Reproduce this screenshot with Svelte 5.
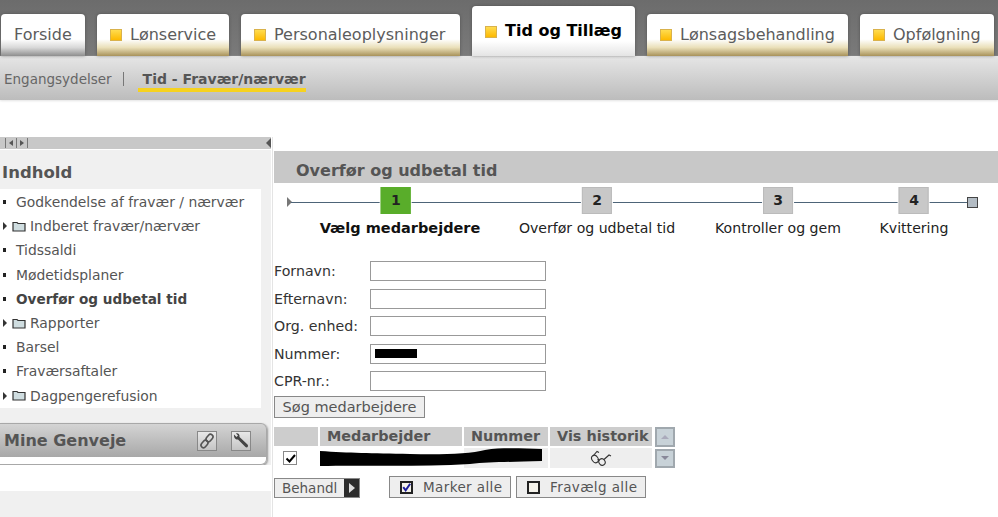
<script lang="ts">
  const tabs = [
    { label: 'Forside', width: 84, square: false },
    { label: 'Lønservice', width: 132, square: true },
    { label: 'Personaleoplysninger', width: 219, square: true },
    { label: 'Tid og Tillæg', width: 163, square: true, active: true },
    { label: 'Lønsagsbehandling', width: 201, square: true },
    { label: 'Opfølgning', width: 134, square: true }
  ];

  const menu = [
    { label: 'Godkendelse af fravær / nærvær' },
    { label: 'Indberet fravær/nærvær', folder: true },
    { label: 'Tidssaldi' },
    { label: 'Mødetidsplaner' },
    { label: 'Overfør og udbetal tid', bold: true },
    { label: 'Rapporter', folder: true },
    { label: 'Barsel' },
    { label: 'Fraværsaftaler' },
    { label: 'Dagpengerefusion', folder: true }
  ];

  const steps = [
    { n: 1, label: 'Vælg medarbejdere', x: 396, current: true },
    { n: 2, label: 'Overfør og udbetal tid', x: 597 },
    { n: 3, label: 'Kontroller og gem', x: 778 },
    { n: 4, label: 'Kvittering', x: 914 }
  ];

  const fields = ['Fornavn:', 'Efternavn:', 'Org. enhed:', 'Nummer:', 'CPR-nr.:'];
</script>

<div class="page">
  <nav class="tabs">
    {#each tabs as tab}
      <div class="tab" class:active={tab.active} class:plain={!tab.square} style="width: {tab.width}px">
        {#if tab.square}<span class="square"></span>{/if}
        <span>{tab.label}</span>
      </div>
    {/each}
  </nav>

  <div class="subnav">
    <span class="sub">Engangsydelser</span>
    <span class="sep"></span>
    <span class="sub current">Tid - Fravær/nærvær</span>
  </div>

  <div class="main">
    <aside>
      <div class="strip">
        <div class="strip-left">
          <i class="bar"></i><i class="tri left"></i><i class="bar"></i><i class="tri right"></i><i class="bar"></i>
        </div>
        <i class="tri left dark"></i>
      </div>
      <h2>Indhold</h2>
      <ul>
        {#each menu as item}
          <li class:bold={item.bold}>
            {#if item.folder}
              <i class="tri right black"></i>
              <svg class="folder" width="14" height="11" viewBox="0 0 14 11">
                <path d="M1 2.5V1.5H5L6 2.5H13V10H1Z" fill="#cfdde0" stroke="#333" stroke-width="1.2" />
              </svg>
            {:else}
              <i class="dot"></i>
            {/if}
            <span>{item.label}</span>
          </li>
        {/each}
      </ul>
      <div class="shortcuts">
        <span>Mine Genveje</span>
        <div class="tools">
          <button aria-label="Link">
            <svg width="18" height="18" viewBox="0 0 18 18" fill="none" stroke="#555" stroke-width="1.6">
              <rect x="9" y="2" width="5" height="8" rx="2.5" transform="rotate(40 11.5 6)" />
              <rect x="4" y="8" width="5" height="8" rx="2.5" transform="rotate(40 6.5 12)" />
            </svg>
          </button>
          <button aria-label="Værktøj">
            <svg width="18" height="18" viewBox="0 0 18 18">
              <path d="M2 2.5L4.5 5L6 3.5L4 1.5C6 .8 8 2.5 7.5 5L15.5 12.5C17 14 15 16.5 13.5 15L6 7.5C4 8 1.5 6 2 2.5Z" fill="#444" />
            </svg>
          </button>
        </div>
      </div>
      <div class="aside-foot"></div>
    </aside>

    <section class="content">
      <h1>Overfør og udbetal tid</h1>

      <div class="stepper">
        <i class="start"></i>
        <i class="line"></i>
        {#each steps as step}
          <div class="step" class:current={step.current} style="left: {step.x - 274}px">
            <b class="num">{step.n}</b>
            <span class="step-label">{step.label}</span>
          </div>
        {/each}
        <i class="end"></i>
      </div>

      <form>
        {#each fields as field}
          <label>
            <span>{field}</span>
            <span class="input">
              {#if field === 'Nummer:'}<i class="blackout"></i>{/if}
            </span>
          </label>
        {/each}
      </form>

      <div class="btn search">Søg medarbejdere</div>

      <div class="grid-wrap">
        <div class="grid">
          <div class="th"></div>
          <div class="th">Medarbejder</div>
          <div class="th">Nummer</div>
          <div class="th">Vis historik</div>
          <div class="td"><span class="check">
            <svg width="11" height="11" viewBox="0 0 11 11"><path d="M1.5 5.5L4.5 8.5L10 2" fill="none" stroke="#000" stroke-width="2" /></svg>
          </span></div>
          <div class="td white"></div>
          <div class="td"></div>
          <div class="td center">
            <svg width="22" height="16" viewBox="0 0 22 16" fill="none" stroke="#333" stroke-width="1.1">
              <ellipse cx="5" cy="9" rx="3" ry="4" transform="rotate(-35 5 9)" />
              <ellipse cx="12" cy="12" rx="3" ry="3.4" transform="rotate(-35 12 12)" />
              <path d="M7.5 9.5L9.5 10.5M3 6L7 1.5L9 2.5M14 9.5L19 5L21 6" />
            </svg>
          </div>
          <svg class="scribble" width="222" height="22" viewBox="0 0 222 22">
            <path d="M0 4C30 6 50 6 90 7C120 8 150 7 165 3C185 0 205 2 222 2V14C190 15 170 15 150 17C100 20 40 18 0 19Z" fill="#000" />
          </svg>
        </div>
        <div class="scroller">
          <div class="scroll-btn"><i class="up"></i></div>
          <div class="scroll-btn"><i class="down"></i></div>
        </div>
      </div>

      <div class="actions">
        <div class="btn behandl">Behandl <i class="go"><i class="tri right white-tri"></i></i></div>
        <div class="btn mark">
          <span class="box on">
            <svg width="11" height="11" viewBox="0 0 11 11"><path d="M1.5 5L4.5 9L10 1" fill="none" stroke="#1c1c9c" stroke-width="2.4" /></svg>
          </span>
          Marker alle
        </div>
        <div class="btn mark second"><span class="box"></span> Fravælg alle</div>
      </div>
    </section>
  </div>
</div>

<style>
  :global(body) {
    margin: 0;
    overflow: hidden;
    background: #fff;
  }

  .page {
    width: 998px;
    height: 517px;
    overflow: hidden;
    font-family: "DejaVu Sans", Verdana, sans-serif;
    font-size: 13px;
    color: #444;
  }

  i {
    display: block;
  }

  .tabs {
    height: 56px;
    background: linear-gradient(#6c6c6c, #7a7a7a);
    display: flex;
    align-items: flex-end;
    gap: 12px;
    padding-left: 1px;
    box-sizing: border-box;
  }

  .tab {
    height: 42px;
    box-sizing: border-box;
    border-radius: 4px 4px 0 0;
    background: linear-gradient(#fff 0, #fff 60%, #eadfb8 80%, #a8925a 100%);
    display: flex;
    align-items: center;
    gap: 8px;
    padding-left: 13px;
    padding-bottom: 1px;
    font-size: 16px;
    color: #5c5c5c;
    white-space: nowrap;
    box-shadow: 0 0 3px rgba(50, 50, 50, 0.5);
  }

  .tab.plain {
    background: linear-gradient(#fff 0, #fff 60%, #d8d8d8 80%, #8e8e8e 100%);
  }

  .tab.active {
    height: 50px;
    background: linear-gradient(#fff 0, #fff 70%, #e4e4e4 100%);
    font-weight: bold;
    color: #000;
    padding-bottom: 0;
    align-items: flex-start;
    padding-top: 15px;
  }

  .tab.active .square {
    margin-top: 5px;
  }

  .square {
    width: 12px;
    height: 12px;
    flex: none;
    background: linear-gradient(#ffdc50, #fdb900);
    border: 1px solid #d9b24c;
    box-sizing: border-box;
  }

  .subnav {
    height: 44px;
    background: linear-gradient(#e6e6e6, #bcbcbc);
    display: flex;
    align-items: flex-start;
    padding-left: 4px;
    padding-top: 15px;
    box-sizing: border-box;
    font-size: 13.5px;
    color: #666;
    box-shadow: 0 1px 2px #e4e4e4;
  }

  .sep {
    width: 1px;
    height: 14px;
    background: #777;
    margin: 1px 19px 0 11px;
  }

  .sub.current {
    font-weight: bold;
    color: #555;
    border-bottom: 4px solid #f6d21f;
    padding: 0 0 1px 5px;
    font-size: 14px;
    margin-left: -5px;
  }

  .main {
    display: grid;
    grid-template-columns: 272px 1fr;
    padding-top: 37px;
  }

  aside {
    width: 271px;
    background: #f0f0f0;
    height: 380px;
    display: flex;
    flex-direction: column;
  }

  .strip {
    height: 12px;
    background: #c8c8c8;
    display: flex;
    align-items: center;
    justify-content: space-between;
    margin-bottom: 1px;
    box-shadow: 0 1px 0 #fff;
  }

  .strip-left {
    display: flex;
    align-items: center;
    gap: 3px;
    padding-left: 5px;
  }

  .bar {
    width: 1px;
    height: 10px;
    background: #777;
  }

  .tri {
    width: 0;
    height: 0;
    border-top: 3px solid transparent;
    border-bottom: 3px solid transparent;
  }

  .tri.left {
    border-right: 4px solid #555;
  }

  .tri.right {
    border-left: 4px solid #555;
  }

  .tri.dark {
    border-top-width: 5px;
    border-bottom-width: 5px;
    border-right-width: 5px;
  }

  h2 {
    margin: 0;
    height: 39px;
    line-height: 46px;
    padding-left: 2px;
    font-size: 16.5px;
    color: #555;
  }

  ul {
    list-style: none;
    margin: 0;
    padding: 0;
    width: 261px;
    height: 219px;
    background: #fff;
    box-sizing: border-box;
    padding-top: 1px;
  }

  li {
    height: 24.2px;
    display: flex;
    align-items: center;
    font-size: 13.9px;
    color: #555;
    white-space: nowrap;
  }

  li.bold {
    font-weight: bold;
    font-size: 13.6px;
    color: #444;
  }

  .dot {
    width: 3px;
    height: 4px;
    background: #222;
    margin: 0 10px 0 3px;
  }

  .tri.black {
    border-left-color: #333;
    border-top-width: 4px;
    border-bottom-width: 4px;
    margin-left: 3px;
    margin-right: 5px;
  }

  .folder {
    margin-right: 4px;
  }

  .shortcuts {
    margin-top: 15px;
    width: 267px;
    height: 42px;
    box-sizing: border-box;
    border: 1px solid #a8a8a8;
    border-left: 0;
    border-radius: 0 6px 6px 0;
    background: linear-gradient(#d4d4d4 0, #a8a8a8 82%, #fff 82%, #fff 100%);
    box-shadow: 1px 1px 2px #999;
    display: flex;
    justify-content: space-between;
    padding: 0 15px 7px 4px;
    align-items: center;
    font-size: 16px;
    font-weight: bold;
    color: #555;
  }

  .tools {
    display: flex;
    gap: 14px;
  }

  .tools button {
    width: 20px;
    height: 20px;
    padding: 0;
    border: 1px solid #888;
    background: linear-gradient(#e8e8e8, #c4c4c4);
    display: flex;
    align-items: center;
    justify-content: center;
  }

  .aside-foot {
    background: #fff;
    height: 26px;
    flex: none;
  }

  .content {
    border-left: 1px solid #e4e4e4;
    position: relative;
    padding-left: 1px;
    padding-top: 14px;
  }

  h1 {
    margin: 0;
    height: 32px;
    background: #c8c8c8;
    padding-left: 22px;
    line-height: 40px;
    font-size: 16px;
    color: #555;
  }

  .stepper {
    position: relative;
    height: 78px;
  }

  .start {
    position: absolute;
    left: 13px;
    top: 14px;
    width: 0;
    height: 0;
    border-left: 5px solid #777;
    border-top: 5px solid transparent;
    border-bottom: 5px solid transparent;
  }

  .line {
    position: absolute;
    left: 17px;
    width: 680px;
    top: 19px;
    height: 1px;
    background: #4d6478;
  }

  .end {
    position: absolute;
    left: 693px;
    top: 14px;
    width: 11px;
    height: 11px;
    box-sizing: border-box;
    background: #b3bcc4;
    border: 1px solid #444;
  }

  .step {
    position: absolute;
    top: 4px;
    transform: translateX(-50%);
    display: flex;
    flex-direction: column;
    align-items: center;
  }

  .num {
    width: 30px;
    height: 27px;
    background: #c8c8c8;
    border: 1px solid #bbb;
    box-sizing: border-box;
    box-shadow: 0 0 0 1px #fff;
    color: #222;
    text-align: center;
    line-height: 24px;
    font-size: 14px;
  }

  .current .num {
    background: #59ad2a;
    border-color: #59ad2a;
  }

  .step-label {
    margin-top: 5px;
    white-space: nowrap;
    font-size: 14.1px;
    line-height: 18px;
    color: #222;
  }

  .current .step-label {
    font-weight: bold;
    font-size: 14.5px;
    color: #111;
    transform: translateX(4px);
  }

  form {
    display: flex;
    flex-direction: column;
    gap: 7.5px;
  }

  label {
    display: flex;
    align-items: center;
    height: 20px;
    font-size: 14.2px;
    color: #333;
  }

  label > span:first-child {
    width: 96px;
  }

  .input {
    width: 176px;
    height: 20px;
    box-sizing: border-box;
    border: 1px solid #999;
    display: flex;
    align-items: center;
    background: #fff;
  }

  .blackout {
    width: 42px;
    height: 9px;
    margin-left: 4px;
    background: #000;
  }

  .btn {
    box-sizing: border-box;
    border: 1px solid #888;
    background: #eee;
    color: #555;
    font-size: 13.5px;
    white-space: nowrap;
    display: flex;
    align-items: center;
  }

  .search {
    margin-top: 5px;
    width: 151px;
    height: 22px;
    justify-content: center;
    font-size: 14.5px;
  }

  .grid-wrap {
    margin-top: 9px;
    display: flex;
    gap: 3px;
  }

  .grid {
    position: relative;
    display: grid;
    grid-template-columns: 44px 142px 84px 102px;
    grid-template-rows: 19px 20px;
    gap: 2px;
  }

  .th {
    background: #cdcdcd;
    font-weight: bold;
    font-size: 14.4px;
    color: #555;
    padding-left: 7px;
    line-height: 19px;
    white-space: nowrap;
  }

  .td {
    background: #eee;
    display: flex;
    align-items: center;
  }

  .td:nth-child(5) {
    background: #fff;
    padding-left: 9px;
  }

  .td.white {
    background: #fff;
  }

  .td.center {
    justify-content: center;
  }

  .check {
    width: 14px;
    height: 14px;
    box-sizing: border-box;
    border: 1px solid #888;
    display: flex;
    align-items: center;
    justify-content: center;
    background: #fff;
  }

  .scribble {
    position: absolute;
    left: 46px;
    top: 20px;
  }

  .scroller {
    display: flex;
    flex-direction: column;
    gap: 2px;
  }

  .scroll-btn {
    width: 20px;
    height: 19.5px;
    box-sizing: border-box;
    background: #c8d2d8;
    border: 2px solid #a0a8ae;
    display: flex;
    align-items: center;
    justify-content: center;
  }

  .up {
    border-left: 4px solid transparent;
    border-right: 4px solid transparent;
    border-bottom: 4px solid #aab;
  }

  .down {
    border-left: 4px solid transparent;
    border-right: 4px solid transparent;
    border-top: 4px solid #889;
  }

  .actions {
    display: flex;
    align-items: flex-end;
    margin-top: 8px;
  }

  .behandl {
    width: 86px;
    height: 20px;
    padding-left: 7px;
    margin-right: 29px;
    justify-content: space-between;
  }

  .go {
    width: 15px;
    height: 18px;
    background: #2c2c2c;
    display: flex;
    align-items: center;
    justify-content: center;
  }

  .tri.white-tri {
    border-left: 6px solid #ddd;
    border-top-width: 5px;
    border-bottom-width: 5px;
  }

  .mark {
    width: 122px;
    height: 22px;
    padding-left: 10px;
    gap: 10px;
    letter-spacing: 0.4px;
  }

  .mark.second {
    width: 130px;
    margin-left: 5px;
  }

  .box {
    width: 13px;
    height: 13px;
    box-sizing: border-box;
    border: 2px solid #222;
    background: #f4f2ea;
    display: flex;
    align-items: center;
    justify-content: center;
  }
</style>
